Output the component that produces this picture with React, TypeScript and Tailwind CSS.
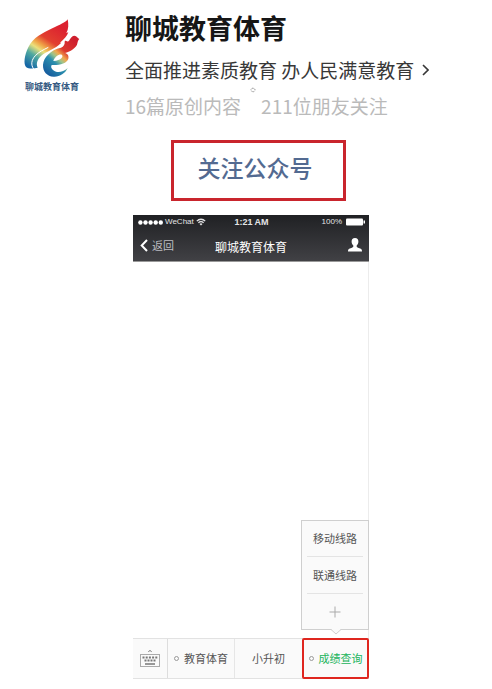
import React from 'react';

const cjk = "font-['Noto_Sans_CJK_SC','Noto_Sans',sans-serif]";

function Logo() {
  return (
    <svg viewBox="72 54 174 186" className="h-[62px] w-[58px]" role="img" aria-label="聊城教育体育">
      <defs>
        <linearGradient id="flame" gradientUnits="userSpaceOnUse" x1="180" y1="80" x2="98" y2="204">
          <stop offset="0" stopColor="#dc2230" />
          <stop offset="0.34" stopColor="#e2402f" />
          <stop offset="0.5" stopColor="#f0a648" />
          <stop offset="0.6" stopColor="#ebe07c" />
          <stop offset="0.76" stopColor="#4fa9a0" />
          <stop offset="1" stopColor="#1668a6" />
        </linearGradient>
        <linearGradient id="bird" gradientUnits="userSpaceOnUse" x1="225" y1="120" x2="140" y2="215">
          <stop offset="0" stopColor="#cf1f2e" />
          <stop offset="0.34" stopColor="#dc3a2e" />
          <stop offset="0.48" stopColor="#f0a94e" />
          <stop offset="0.58" stopColor="#9cc58c" />
          <stop offset="0.7" stopColor="#2b8fae" />
          <stop offset="1" stopColor="#185f9f" />
        </linearGradient>
      </defs>
      <path
        fill="url(#flame)"
        d="M206 58C200 68 182 74 160 85C132 99 102 112 88 142C76 166 73 192 81 201C88 207 106 206 116 203C110 190 116 178 126 168C142 153 168 148 187 128L183 128C196 118 204 108 208 97L202 99C209 88 209 74 206 58Z"
      />
      <path
        fill="none"
        stroke="#fff"
        strokeWidth="3"
        d="M104 207C95 194 97 180 109 167C119 156 134 149 148 142"
      />
      <path
        fill="url(#bird)"
        d="M241 117C236 115 234 108 226 107C216 108 214 118 209 123C204 128 198 118 197 125C198 133 194 139 186 143C154 150 134 172 132 194C131 214 144 229 164 230C182 231 198 221 206 204C194 215 176 220 165 212C156 206 155 200 158 195C182 196 204 190 208 176C210 166 205 161 198 159C212 155 228 146 234 134C236 127 237 120 241 117ZM163 183C168 170 179 162 188 164C195 168 187 181 163 183Z"
      />
    </svg>
  );
}

function Profile() {
  return (
    <header className="flex items-start">
      <div className="flex w-[125px] shrink-0 flex-col items-center pt-[18px] pr-[21px]">
        <Logo />
        <span className="mt-px text-[9px] leading-[12px] font-bold whitespace-nowrap text-[#365a82]">聊城教育体育</span>
      </div>
      <div className="min-w-0 pt-2">
        <h1 className="text-[27px] leading-[40px] font-bold text-[#161616]">聊城教育体育</h1>
        <a href="#about" className="mt-2 flex items-center gap-2 text-[19px] leading-[28px] whitespace-nowrap text-[#383838]">
          全面推进素质教育 办人民满意教育
          <svg viewBox="0 0 7 12" className="h-3 w-[7px]" fill="none" stroke="currentColor" strokeWidth="1.6" aria-hidden="true">
            <path d="M1 1l5 5-5 5" />
          </svg>
        </a>
        <div className="relative mt-2 flex gap-5 text-[19px] leading-[28px] whitespace-nowrap text-[#bababa]">
          <span>16篇原创内容</span>
          <span>211位朋友关注</span>
          <svg viewBox="0 0 6 6" className="absolute -top-[5px] left-[125px] size-[6px]" fill="none" stroke="#888" strokeDasharray="1.4 0.8" aria-hidden="true">
            <path d="M3 .7L5.3 3 3 5.3 .7 3z" />
          </svg>
        </div>
      </div>
    </header>
  );
}

function StatusBar() {
  return (
    <div className="grid grid-cols-[1fr_auto_1fr] items-center pr-1 pl-[5px] font-['Liberation_Sans',sans-serif] text-[8px] leading-[14px] text-[#e4e4e6]">
      <div className="flex items-center gap-[2px]">
        <svg viewBox="0 0 25 5" className="h-[5px] w-[25px]" fill="#fff" aria-hidden="true">
          <circle cx="2.4" cy="2.5" r="2.2" />
          <circle cx="7.5" cy="2.5" r="2.2" />
          <circle cx="12.6" cy="2.5" r="2.2" />
          <circle cx="17.7" cy="2.5" r="2.2" />
          <circle cx="22.8" cy="2.5" r="2.2" />
        </svg>
        <span>WeChat</span>
        <svg viewBox="0 0 10 8" className="h-2 w-[10px]" fill="none" stroke="#e4e4e6" strokeWidth="1.3" aria-hidden="true">
          <path d="M.8 3.1C3.2.6 6.8.6 9.2 3.1M2.4 4.7c1.5-1.5 3.7-1.5 5.2 0" />
          <path d="M3.5 5.9c.9-.8 2.1-.8 3 0L5 7.5z" fill="#e4e4e6" stroke="none" />
        </svg>
      </div>
      <span className="text-[9px] font-bold">1:21 AM</span>
      <div className="flex items-center justify-end gap-1">
        <span>100%</span>
        <svg viewBox="0 0 19 8" className="h-2 w-[19px]" fill="#fff" aria-hidden="true">
          <rect y=".5" width="17" height="7" rx="1" />
          <rect x="17.5" y="2.5" width="1.5" height="3" />
        </svg>
      </div>
    </div>
  );
}

function TitleBar() {
  return (
    <div className="grid h-8 grid-cols-[1fr_auto_1fr] items-center px-[7px]">
      <button type="button" className="flex items-center gap-1 text-[11px] leading-4 text-[#bdbdc2]">
        <svg viewBox="0 0 8 13" className="h-[13px] w-2" fill="none" stroke="#fff" strokeWidth="2" aria-hidden="true">
          <path d="M7 1L1.7 6.5 7 12" />
        </svg>
        返回
      </button>
      <h2 className="pt-1 text-[12px] leading-4 text-white">聊城教育体育</h2>
      <button type="button" aria-label="账号资料" className="justify-self-end">
        <svg viewBox="0 0 14 14" className="size-[14px]" fill="#fff" aria-hidden="true">
          <path d="M7 0C4.7 0 3.5 1.6 3.6 3.8 3.7 5.7 4.4 6.7 5.3 7.6 5.6 8.7 5.2 9.2 4 9.7L1.2 10.8C.3 11.3 0 12.2 0 13.5h14c0-1.3-.3-2.2-1.2-2.7L10 9.7C8.8 9.2 8.4 8.7 8.7 7.6 9.6 6.7 10.3 5.7 10.4 3.8 10.5 1.6 9.3 0 7 0z" />
        </svg>
      </button>
    </div>
  );
}

function Submenu() {
  return (
    <div className="absolute right-0 bottom-[49px] flex w-[68px] flex-col border border-[#cfcfcf] bg-[#fafafa] px-[5px] text-[11px] text-[#555]">
      <button type="button" className="h-9 border-b border-[#e4e4e4]">移动线路</button>
      <button type="button" className="h-[37px] border-b border-[#e4e4e4]">联通线路</button>
      <button type="button" aria-label="更多" className="flex h-[35px] items-center justify-center">
        <svg viewBox="0 0 12 12" className="size-3" stroke="#aaa" aria-hidden="true">
          <path d="M6 .5v11M.5 6h11" />
        </svg>
      </button>
      <svg viewBox="0 0 10 6" className="absolute -bottom-[6px] left-[29px] h-[6px] w-[10px]" aria-hidden="true">
        <path d="M0 0h10L5 5z" fill="#fafafa" />
        <path d="M0 .5L5 5 10 .5" fill="none" stroke="#cfcfcf" />
      </svg>
    </div>
  );
}

function BottomBar() {
  return (
    <nav className="grid h-[41px] grid-cols-[35px_1fr_1fr_1fr] border-y border-[#e2e2e2] bg-[#fafafa] text-[11px] text-[#555]">
      <button type="button" aria-label="键盘" className="flex items-center justify-center border-r border-[#ddd]">
        <svg viewBox="0 0 20 18" className="h-[18px] w-5" fill="none" stroke="#777" aria-hidden="true">
          <rect x=".5" y="4.5" width="19" height="12" stroke="#aaa" />
          <path d="M8.3 1.7L10 .5 11.7 1.7" />
          <path d="M2.5 7.5h15" strokeWidth="2" strokeDasharray="2 1.2" />
          <path d="M4.5 10.5h11" strokeWidth="2" strokeDasharray="2 1" />
          <path d="M5 14h10" strokeWidth="1.5" />
        </svg>
      </button>
      <button type="button" className="flex items-center justify-center gap-[5px] border-r border-[#e6e6e6]">
        <span className="size-[5px] rounded-full border border-[#999]" />
        教育体育
      </button>
      <button type="button">小升初</button>
      <button type="button" className="-my-px flex items-center justify-center gap-[5px] rounded-xs border-2 border-[#df261f] text-[#20b45a]">
        <span className="size-[5px] rounded-full border border-[#999]" />
        成绩查询
      </button>
    </nav>
  );
}

export default function App() {
  return (
    <main className={`${cjk} bg-white pb-[10px]`}>
      <Profile />
      <div className="mt-5 flex justify-center pl-6">
        <button type="button" className="h-[61px] border-3 border-[#c9252d] pr-[30px] pb-2 pl-6 text-[23px] leading-8 font-medium text-[#536a91]">
          关注公众号
        </button>
      </div>
      <div className="mt-[14px] flex justify-center pl-[10px]">
        <section className="relative flex w-[236px] flex-col">
          <div className="border-b border-[#999] bg-linear-to-b from-[#202124] to-[#414145]">
            <StatusBar />
            <TitleBar />
          </div>
          <div className="h-[376px] border-r border-[#ececec]" />
          <BottomBar />
          <Submenu />
        </section>
      </div>
    </main>
  );
}
